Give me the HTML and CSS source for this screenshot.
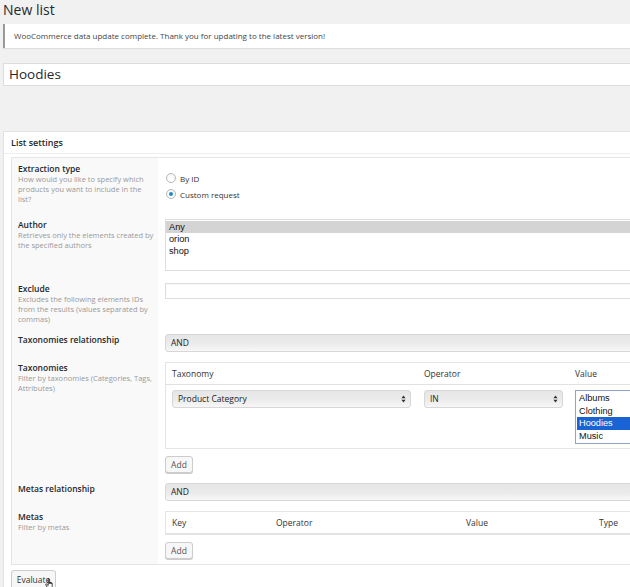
FILE: index.html
```html
<!DOCTYPE html>
<html>
<head>
<meta charset="utf-8">
<title>New list</title>
<link rel="stylesheet" href="styles.css">
</head>
<body>
<div class="wrap">
  <h1 class="page-title">New list</h1>
  <div class="notice">WooCommerce data update complete. Thank you for updating to the latest version!</div>
  <div class="title-field">Hoodies</div>

  <div class="postbox">
    <h2 class="postbox-title">List settings</h2>
    <div class="inside">
      <div class="form">

        <div class="row">
          <div class="label">
            <div class="lt">Extraction type</div>
            <div class="ld">How would you like to specify which<br>products you want to include in the<br>list?</div>
          </div>
          <div class="field">
            <div class="radios">
              <div class="radio"><span class="rb"></span>By ID</div>
              <div class="radio"><span class="rb checked"></span>Custom request</div>
            </div>
          </div>
        </div>

        <div class="row">
          <div class="label">
            <div class="lt">Author</div>
            <div class="ld">Retrieves only the elements created by<br>the specified authors</div>
          </div>
          <div class="field">
            <div class="multi author">
              <div class="opt sel-gray">Any</div>
              <div class="opt">orion</div>
              <div class="opt">shop</div>
            </div>
          </div>
        </div>

        <div class="row">
          <div class="label">
            <div class="lt">Exclude</div>
            <div class="ld">Excludes the following elements IDs<br>from the results (values separated by<br>commas)</div>
          </div>
          <div class="field">
            <div class="text-input"></div>
          </div>
        </div>

        <div class="row">
          <div class="label">
            <div class="lt">Taxonomies relationship</div>
          </div>
          <div class="field">
            <div class="select">AND</div>
          </div>
        </div>

        <div class="row">
          <div class="label">
            <div class="lt">Taxonomies</div>
            <div class="ld">Filter by taxonomies (Categories, Tags,<br>Attributes)</div>
          </div>
          <div class="field">
            <div class="subtable tax">
              <div class="th">Taxonomy</div>
              <div class="th">Operator</div>
              <div class="th">Value</div>
              <div class="td">
                <div class="select arrows w-cat">Product Category
                  <svg class="arr" width="5" height="8" viewBox="0 0 5 8"><path d="M2.5 0.5 L4.6 3.2 H0.4 Z M2.5 7.5 L4.6 4.8 H0.4 Z" fill="#333"/></svg>
                </div>
              </div>
              <div class="td">
                <div class="select arrows w-op">IN
                  <svg class="arr" width="5" height="8" viewBox="0 0 5 8"><path d="M2.5 0.5 L4.6 3.2 H0.4 Z M2.5 7.5 L4.6 4.8 H0.4 Z" fill="#333"/></svg>
                </div>
              </div>
              <div class="td">
                <div class="multi value">
                  <div class="opt">Albums</div>
                  <div class="opt">Clothing</div>
                  <div class="opt sel-blue">Hoodies</div>
                  <div class="opt">Music</div>
                </div>
              </div>
            </div>
            <div class="btn add">Add</div>
          </div>
        </div>

        <div class="row">
          <div class="label">
            <div class="lt">Metas relationship</div>
          </div>
          <div class="field">
            <div class="select">AND</div>
          </div>
        </div>

        <div class="row">
          <div class="label">
            <div class="lt">Metas</div>
            <div class="ld">Filter by metas</div>
          </div>
          <div class="field">
            <div class="subtable metas">
              <div class="th">Key</div>
              <div class="th">Operator</div>
              <div class="th">Value</div>
              <div class="th">Type</div>
            </div>
            <div class="btn add">Add</div>
          </div>
        </div>

      </div>
      <div class="actions">
        <div class="btn evaluate">Evaluate
          <svg class="cursor" width="10" height="12" viewBox="0 0 11 13"><path d="M3.5 1 C3.5 0.4 4.6 0.4 4.6 1 V6 V4.6 C4.6 4 5.7 4 5.7 4.6 V6 V5 C5.7 4.4 6.8 4.4 6.8 5 V6.2 V5.6 C6.8 5 7.9 5 7.9 5.6 V9 C7.9 10.5 7 11.5 5.6 11.5 H4.6 C3.6 11.5 3 11 2.4 10 L0.8 7.2 C0.5 6.6 1.2 6.1 1.7 6.6 L3.5 8.2 Z" fill="#fff" stroke="#000" stroke-width="0.8" stroke-linejoin="round"/></svg>
        </div>
      </div>
    </div>
  </div>
</div>
</body>
</html>
```
FILE: styles.css
```css
html, body {
  margin: 0;
  padding: 0;
  overflow: hidden;
  background: #f1f1f1;
}
body {
  font-family: "Open Sans", "Liberation Sans", sans-serif;
  color: #444;
}
.wrap {
  width: 700px;
  padding-left: 3px;
}
.page-title {
  margin: 0;
  height: 24px;
  font-size: 14px;
  font-weight: 400;
  line-height: 20px;
  color: #23282d;
}
.notice {
  height: 24px;
  line-height: 24px;
  background: #fff;
  border-left: 2px solid #9a9a9a;
  box-shadow: 0 1px 1px rgba(0, 0, 0, 0.08);
  padding-left: 9px;
  font-size: 8px;
  color: #444;
}
.title-field {
  margin-top: 15px;
  height: 21px;
  line-height: 21px;
  background: #fff;
  border: 1px solid #dddddd;
  padding-left: 5px;
  font-size: 13.5px;
  color: #23282d;
}
.postbox {
  margin-top: 45px;
  background: #fff;
  border: 1px solid #e3e3e3;
  border-right: none;
}
.postbox-title {
  margin: 0;
  height: 21px;
  line-height: 21px;
  padding-left: 7px;
  font-size: 9px;
  font-weight: 600;
  color: #23282d;
  border-bottom: 1px solid #eeeeee;
}
.inside {
  padding: 3px 0 0 7px;
}
.form {
  border: 1px solid #e5e5e5;
  border-right: none;
}
.row {
  display: grid;
  grid-template-columns: 146px 1fr;
}
.label {
  background: #f9f9f9;
  padding: 5px 2px 5px 6px;
  white-space: nowrap;
}
.lt {
  font-size: 8.5px;
  font-weight: 600;
  line-height: 11px;
  color: #23282d;
}
.ld {
  font-size: 7.5px;
  line-height: 10px;
  color: #999;
}
.field {
  padding: 5px 0 5px 7px;
}
.radios {
  margin: 7px 0 7px 1px;
}
.radio {
  display: flex;
  align-items: center;
  height: 16px;
  font-size: 8px;
  color: #333;
}
.rb {
  position: relative;
  box-sizing: border-box;
  width: 10px;
  height: 10px;
  border: 1px solid #b4b9be;
  border-radius: 50%;
  background: #fff;
  box-shadow: inset 0 1px 2px rgba(0, 0, 0, 0.07);
  margin-right: 4px;
}
.rb.checked::after {
  content: "";
  position: absolute;
  left: 2px;
  top: 2px;
  width: 4px;
  height: 4px;
  border-radius: 50%;
  background: #1e8cbe;
}
.multi {
  box-sizing: border-box;
  background: #fff;
  font-family: "Liberation Sans", Arial, sans-serif;
  font-size: 9.2px;
  color: #111;
}
.author {
  height: 52px;
  border: 1px solid #dddddd;
  padding-top: 1px;
  margin-bottom: 2px;
}
.author .opt {
  height: 12px;
  line-height: 12px;
  padding-left: 3px;
}
.sel-gray {
  background: #d4d4d4;
}
.value {
  width: 80px;
  height: 54px;
  border: 1px solid #8fa3c2;
  padding: 1px 0 0 1px;
}
.value .opt {
  height: 12.5px;
  line-height: 12.5px;
  padding-left: 2px;
}
.sel-blue {
  background: #1a63d5;
  color: #fff;
}
.text-input {
  box-sizing: border-box;
  height: 16px;
  border: 1px solid #dddddd;
  box-shadow: inset 0 1px 2px rgba(0, 0, 0, 0.04);
  background: #fff;
}
.select {
  position: relative;
  box-sizing: border-box;
  height: 18px;
  line-height: 16px;
  border: 1px solid #d7d7d7;
  border-radius: 3px;
  background: linear-gradient(#e6e6e6, #ebebeb 55%, #f7f7f7);
  padding-left: 5px;
  font-size: 8.5px;
  color: #222;
}
.select .arr {
  position: absolute;
  right: 4px;
  top: 4px;
}
.w-cat {
  width: 239px;
}
.w-op {
  width: 139px;
}
.subtable {
  display: grid;
  border: 1px solid #e5e5e5;
  border-right: none;
  background: #fff;
}
.tax {
  grid-template-columns: 252px 151px 1fr;
}
.metas {
  grid-template-columns: 104px 190px 133px 1fr;
}
.th {
  height: 21px;
  line-height: 21px;
  padding-left: 6px;
  font-size: 8.5px;
  color: #333;
  border-bottom: 1px solid #e1e1e1;
}
.td {
  padding: 5px 0 4px 6px;
}
.btn {
  position: relative;
  box-sizing: border-box;
  border: 1px solid #cccccc;
  border-radius: 3px;
  background: #f7f7f7;
  box-shadow: 0 1px 0 #cccccc;
  font-size: 8.5px;
  color: #555;
  text-align: center;
}
.add {
  margin-top: 7px;
  width: 28px;
  height: 17px;
  line-height: 15px;
}
.actions {
  display: flex;
  padding-top: 5px;
}
.evaluate {
  width: 45px;
  height: 20px;
  line-height: 18px;
  color: #333;
  font-size: 8.5px;
}
.cursor {
  position: absolute;
  left: 33px;
  top: 7px;
}
```
